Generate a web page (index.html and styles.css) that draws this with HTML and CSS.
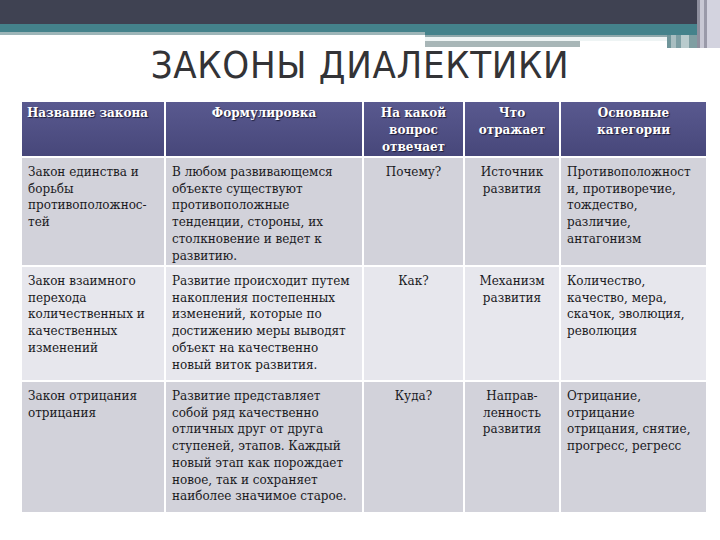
FILE: index.html
```html
<!DOCTYPE html>
<html lang="ru">
<head>
<meta charset="utf-8">
<title>Законы диалектики</title>
<link rel="stylesheet" href="styles.css">
</head>
<body>
<div class="slide">
  <div class="deco"></div>
  <h1 class="title">ЗАКОНЫ ДИАЛЕКТИКИ</h1>
  <table class="laws">
    <colgroup>
      <col class="c1"><col class="c2"><col class="c3"><col class="c4"><col class="c5">
    </colgroup>
    <thead>
      <tr>
        <th class="left">Название закона</th>
        <th>Формулировка</th>
        <th>На какой<br>вопрос<br>отвечает</th>
        <th>Что<br>отражает</th>
        <th>Основные<br>категории</th>
      </tr>
    </thead>
    <tbody>
      <tr class="r1 dark">
        <td>Закон единства и<br>борьбы<br>противоположнос-<br>тей</td>
        <td>В любом развивающемся<br>объекте существуют<br>противоположные<br>тенденции, стороны, их<br>столкновение и ведет к<br>развитию.</td>
        <td class="center">Почему?</td>
        <td class="center">Источник<br>развития</td>
        <td>Противоположност<br>и, противоречие,<br>тождество,<br>различие,<br>антагонизм</td>
      </tr>
      <tr class="r2 light">
        <td>Закон взаимного<br>перехода<br>количественных и<br>качественных<br>изменений</td>
        <td>Развитие происходит путем<br>накопления постепенных<br>изменений, которые по<br>достижению меры выводят<br>объект на качественно<br>новый виток развития.</td>
        <td class="center">Как?</td>
        <td class="center">Механизм<br>развития</td>
        <td>Количество,<br>качество, мера,<br>скачок, эволюция,<br>революция</td>
      </tr>
      <tr class="r3 dark">
        <td>Закон отрицания<br>отрицания</td>
        <td>Развитие представляет<br>собой ряд качественно<br>отличных друг от друга<br>ступеней, этапов. Каждый<br>новый этап как порождает<br>новое, так и сохраняет<br>наиболее значимое старое.</td>
        <td class="center">Куда?</td>
        <td class="center">Направ-<br>ленность<br>развития</td>
        <td>Отрицание,<br>отрицание<br>отрицания, снятие,<br>прогресс, регресс</td>
      </tr>
    </tbody>
  </table>
</div>
</body>
</html>
```

FILE: styles.css
```css
html, body {
  margin: 0;
  padding: 0;
  background: #ffffff;
}

.slide {
  width: 720px;
  height: 540px;
  overflow: hidden;
  background: #ffffff;
}

.deco {
  height: 48px;
  background:
    linear-gradient(to right, #8e8f9e 0 3px, #c8c8d4 3px 7px, #9a9aa9 7px 10px, #d3d3df 10px) 697px 0 / 23px 48px no-repeat,
    linear-gradient(#3f4252, #3f4252) 0 0 / 697px 24px no-repeat,
    linear-gradient(#9db5b8, #9db5b8) 0 32px / 425px 3px no-repeat,
    linear-gradient(#44828b, #44828b) 0 24px / 697px 11px no-repeat,
    linear-gradient(#8fa8ab 0 2px, #eef4f4 2px 6px, #a8b6b7 6px 12px) 425px 35px / 155px 12px no-repeat,
    linear-gradient(#8fa8ab 0 2px, #eef4f4 2px 6px, #ffffff 6px) 580px 35px / 87px 12px no-repeat,
    linear-gradient(to right, #6f959a 0 4px, #a8bec1 4px 9px, #7c9ea3 9px 14px, #b9cbcd 14px 22px, #7f9ea2 22px) 667px 35px / 30px 13px no-repeat;
}

.title {
  margin: 0;
  height: 34px;
  line-height: 34px;
  text-align: center;
  font-family: "DejaVu Sans Condensed", "DejaVu Sans", sans-serif;
  font-stretch: condensed;
  font-weight: normal;
  font-size: 38px;
  letter-spacing: 0.7px;
  color: #333336;
}

.laws {
  margin: 18px 0 0 20px;
  width: 686px;
  table-layout: fixed;
  border-collapse: collapse;
  font-family: "DejaVu Serif", "Liberation Serif", serif;
  font-size: 12px;
}

.c1 { width: 144px; }
.c2 { width: 198px; }
.c3 { width: 101px; }
.c4 { width: 96px; }
.c5 { width: 147px; }

.laws th,
.laws td {
  border: 2px solid #ffffff;
  vertical-align: top;
  white-space: nowrap;
  overflow: hidden;
}

.laws th {
  height: 56px;
  box-sizing: border-box;
  padding: 3px 4px 0;
  background: linear-gradient(#59598f, #47477a);
  color: #ffffff;
  font-weight: bold;
  line-height: 17px;
  text-align: center;
  text-shadow: 1px 1px 1px #1c1c38;
}

.laws th.left {
  text-align: left;
  padding-left: 5px;
}

.laws td {
  box-sizing: border-box;
  padding: 6px 6px 0 6px;
  line-height: 16.7px;
  color: #1a1a1e;
}

.laws td.center {
  text-align: center;
  padding-left: 3px;
  padding-right: 3px;
}

.dark td { background: #d2d2da; }
.light td { background: #e7e7ed; }

.r1 td { height: 109px; }
.r2 td { height: 115px; }
.r3 td { height: 132px; }
```
